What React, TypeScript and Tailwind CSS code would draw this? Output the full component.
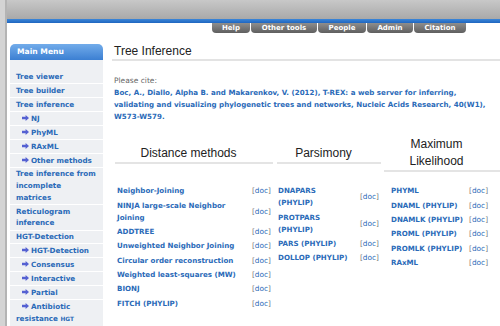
import { FC, ReactNode } from 'react';

const tabs = [
  { label: 'Help', w: 'w-[38px]' },
  { label: 'Other tools', w: 'w-[66px]' },
  { label: 'People', w: 'w-[48px]' },
  { label: 'Admin', w: 'w-[46px]' },
  { label: 'Citation', w: 'w-[52px]' },
];

type TMenuItem = { label: ReactNode; sub?: boolean };

const menu: TMenuItem[] = [
  { label: 'Tree viewer' },
  { label: 'Tree builder' },
  { label: 'Tree inference' },
  { label: 'NJ', sub: true },
  { label: 'PhyML', sub: true },
  { label: 'RAxML', sub: true },
  { label: 'Other methods', sub: true },
  { label: 'Tree inference from\nincomplete\nmatrices' },
  { label: 'Reticulogram\ninference' },
  { label: 'HGT-Detection' },
  { label: 'HGT-Detection', sub: true },
  { label: 'Consensus', sub: true },
  { label: 'Interactive', sub: true },
  { label: 'Partial', sub: true },
  {
    label: (
      <>
        {'Antibiotic\nresistance '}
        <span className="text-[5.8px]">HGT</span>
      </>
    ),
    sub: true,
  },
];

const distance = [
  'Neighbor-Joining',
  'NINJA large-scale Neighbor\nJoining',
  'ADDTREE',
  'Unweighted Neighbor Joining',
  'Circular order reconstruction',
  'Weighted least-squares (MW)',
  'BIONJ',
  'FITCH (PHYLIP)',
];

const parsimony = ['DNAPARS\n(PHYLIP)', 'PROTPARS\n(PHYLIP)', 'PARS (PHYLIP)', 'DOLLOP (PHYLIP)'];

const likelihood = [
  'PHYML',
  'DNAML (PHYLIP)',
  'DNAMLK (PHYLIP)',
  'PROML (PHYLIP)',
  'PROMLK (PHYLIP)',
  'RAxML',
];

const Arrow = () => (
  <svg
    className="mr-[2px] inline-block h-[6px] w-[7px] align-[0px]"
    viewBox="0 0 7 6"
  >
    <polygon points="0,1.8 3.6,1.8 3.6,0 7,3 3.6,6 3.6,4.2 0,4.2" fill="#5561d2" />
  </svg>
);

const Doc = () => (
  <span className="font-normal text-[#777]">
    [<span className="text-[#2a6ab8]">doc</span>]
  </span>
);

interface IColumn {
  title: ReactNode;
  rows: string[];
  className: string;
  rowClass: string;
  nameClass: string;
}

const MethodColumn: FC<IColumn> = ({ ...props }) => {
  return (
    <div className={`flex flex-col ${props.className}`}>
      {/* header */}
      <div className="flex h-[36px] items-center">
        <div className="w-full border-b-2 border-[#e4e4e4] pr-[11px] text-center font-['Liberation_Sans',sans-serif] text-[12px] leading-[17px] text-[#222]">
          {props.title}
        </div>
      </div>
      {/* rows */}
      <div className="mt-[12px] flex flex-col">
        {props.rows.map((item, index) => {
          return (
            <div
              key={index}
              className={`flex items-center py-[1.2px] text-[7.4px] leading-[12px] ${props.rowClass}`}
            >
              <span
                className={`whitespace-pre-line text-[7.1px] font-bold text-[#2a6ab8] ${props.nameClass}`}
              >
                {item}
              </span>
              <Doc />
            </div>
          );
        })}
      </div>
    </div>
  );
};

const App = () => {
  return (
    <div className="flex h-[326px] w-[500px] overflow-hidden bg-white font-['DejaVu_Sans',sans-serif]">
      {/* left edge */}
      <div className="w-[5px] shrink-0 bg-[#d4d4d4]" />
      <div className="w-[2px] shrink-0 bg-[#b4b4b4]" />
      <div className="flex min-w-0 flex-1 flex-col">
        {/* top bar */}
        <div className="h-[19px] shrink-0 bg-gradient-to-b from-[#c8c8c8] to-[#a9a9a9]" />
        <div className="h-[4px] shrink-0 bg-gradient-to-b from-[#3b86d8] to-[#1f66c0]" />
        {/* tabs */}
        <div className="ml-[205px] flex shrink-0 gap-[1px]">
          {tabs.map((tab) => (
            <div
              key={tab.label}
              className={`${tab.w} h-[10px] rounded-b-[4px] bg-gradient-to-b from-[#8e8e8e] to-[#5f5f5f] text-center text-[7px] font-bold leading-[10px] text-white`}
            >
              {tab.label}
            </div>
          ))}
        </div>
        <div className="flex flex-1 shrink-0 pl-[3px] pt-[11px]">
          {/* sidebar */}
          <aside className="flex w-[93px] shrink-0 flex-col">
            <div className="h-[16px] shrink-0 rounded-t-[5px] bg-gradient-to-b from-[#72acea] to-[#3b7fd2] pl-[7px] text-[7.6px] font-bold leading-[16px] text-white">
              Main Menu
            </div>
            <div className="flex-1 bg-[#eef0f3] pt-[10px]">
              {menu.map((item, index) => (
                <div
                  key={index}
                  className={`whitespace-pre-line border-b border-white py-[0.7px] pl-[6px] pr-[2px] text-[7.2px] font-bold leading-[11.6px] text-[#2a6ab8] ${
                    item.sub ? 'indent-[6px]' : ''
                  }`}
                >
                  {item.sub && <Arrow />}
                  {item.label}
                </div>
              ))}
            </div>
          </aside>
          {/* content */}
          <main className="flex min-w-0 flex-1 flex-col pl-[9px]">
            <h1 className="border-b-2 border-[#e3e3e3] pb-[1px] pl-[2px] font-['Liberation_Sans',sans-serif] text-[12px] leading-[14px] text-[#222]">
              Tree Inference
            </h1>
            <div className="mt-[14px] pl-[2px] text-[7.5px] leading-[12px]">
              <p className="text-[#666]">Please cite:</p>
              <p className="whitespace-nowrap text-[7.1px] font-bold text-[#2a6ab8]">
                Boc, A., Diallo, Alpha B. and Makarenkov, V. (2012), T-REX: a web server for inferring,
                <br />
                validating and visualizing phylogenetic trees and networks, Nucleic Acids Research, 40(W1),
                <br />
                W573-W579.
              </p>
            </div>
            <div className="ml-[3px] mt-[13px] flex">
              <MethodColumn
                title="Distance methods"
                rows={distance}
                className="w-[158px] shrink-0"
                rowClass="pl-[2px] pr-[2px]"
                nameClass="flex-1"
              />
              <MethodColumn
                title="Parsimony"
                rows={parsimony}
                className="ml-[4px] w-[104px] shrink-0"
                rowClass="pl-[1px] pr-[2px]"
                nameClass="flex-1"
              />
              <MethodColumn
                title={
                  <>
                    Maximum
                    <br />
                    Likelihood
                  </>
                }
                rows={likelihood}
                className="ml-[3px] w-[116px] shrink-0"
                rowClass="pl-[7px]"
                nameClass="w-[78px]"
              />
            </div>
          </main>
        </div>
      </div>
    </div>
  );
};

export default App;
